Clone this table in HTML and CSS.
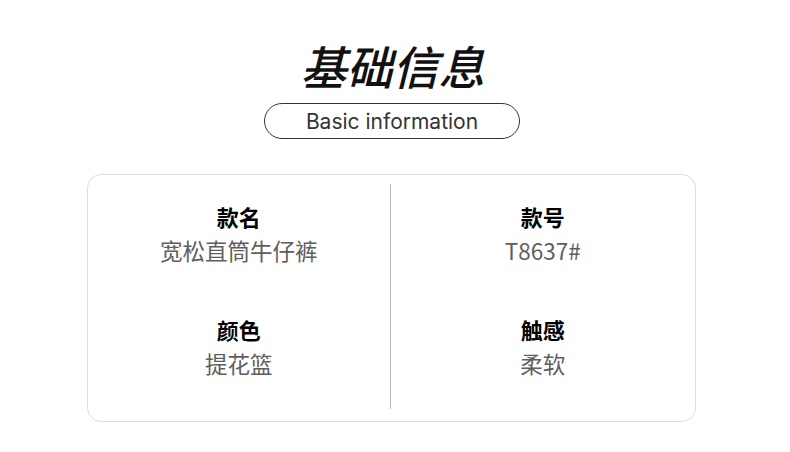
FILE: index.html
```html
<!DOCTYPE html>
<html lang="zh-CN">
<head>
  <meta charset="UTF-8">
  <title>基础信息</title>
  <link rel="stylesheet" href="styles.css">
</head>
<body>
  <div class="page">
    <h1 class="title">基础信息</h1>
    <div class="pill">Basic information</div>

    <div class="card">
      <div class="col col-left">
        <div class="item">
          <div class="label">款名</div>
          <div class="value">宽松直筒牛仔裤</div>
        </div>
        <div class="item">
          <div class="label">颜色</div>
          <div class="value">提花篮</div>
        </div>
      </div>
      <div class="col">
        <div class="item">
          <div class="label">款号</div>
          <div class="value">T8637#</div>
        </div>
        <div class="item">
          <div class="label">触感</div>
          <div class="value">柔软</div>
        </div>
      </div>
    </div>
  </div>
</body>
</html>
```

FILE: styles.css
```css
body {
  margin: 0;
  background-color: #fff;
  font-family: "Noto Sans CJK SC", "Noto Sans", sans-serif;
  color: #111;
}
.page {
  display: flex;
  flex-direction: column;
  align-items: center;
}
.title {
  margin: 37px 0 10px -5px;
  font-size: 46px;
  line-height: 56px;
  font-weight: 500;
  font-style: italic;
  color: #111;
}
.pill {
  box-sizing: border-box;
  margin-left: -6px;
  width: 256px;
  height: 36px;
  border: 1px solid #333;
  border-radius: 18px;
  display: flex;
  align-items: center;
  justify-content: center;
  font-family: Inter, "Noto Sans", sans-serif;
  font-size: 21px;
  font-weight: 400;
  color: #333;
}
.card {
  box-sizing: border-box;
  margin: 35px 0 0 -8px;
  width: 609px;
  height: 248px;
  padding: 9px 0 12px;
  border: 1px solid #ddd;
  border-radius: 14px;
  display: grid;
  grid-template-columns: 1fr 1fr;
}
.col {
  display: flex;
  flex-direction: column;
  align-items: center;
  gap: 45px;
  padding-top: 15px;
}
.col-left {
  border-right: 1px solid #bbb;
}
.item {
  text-align: center;
}
.label {
  font-size: 22px;
  line-height: 34px;
  font-weight: bold;
  color: #000;
}
.value {
  font-size: 22.5px;
  line-height: 34px;
  color: #5e5e5e;
}
```
